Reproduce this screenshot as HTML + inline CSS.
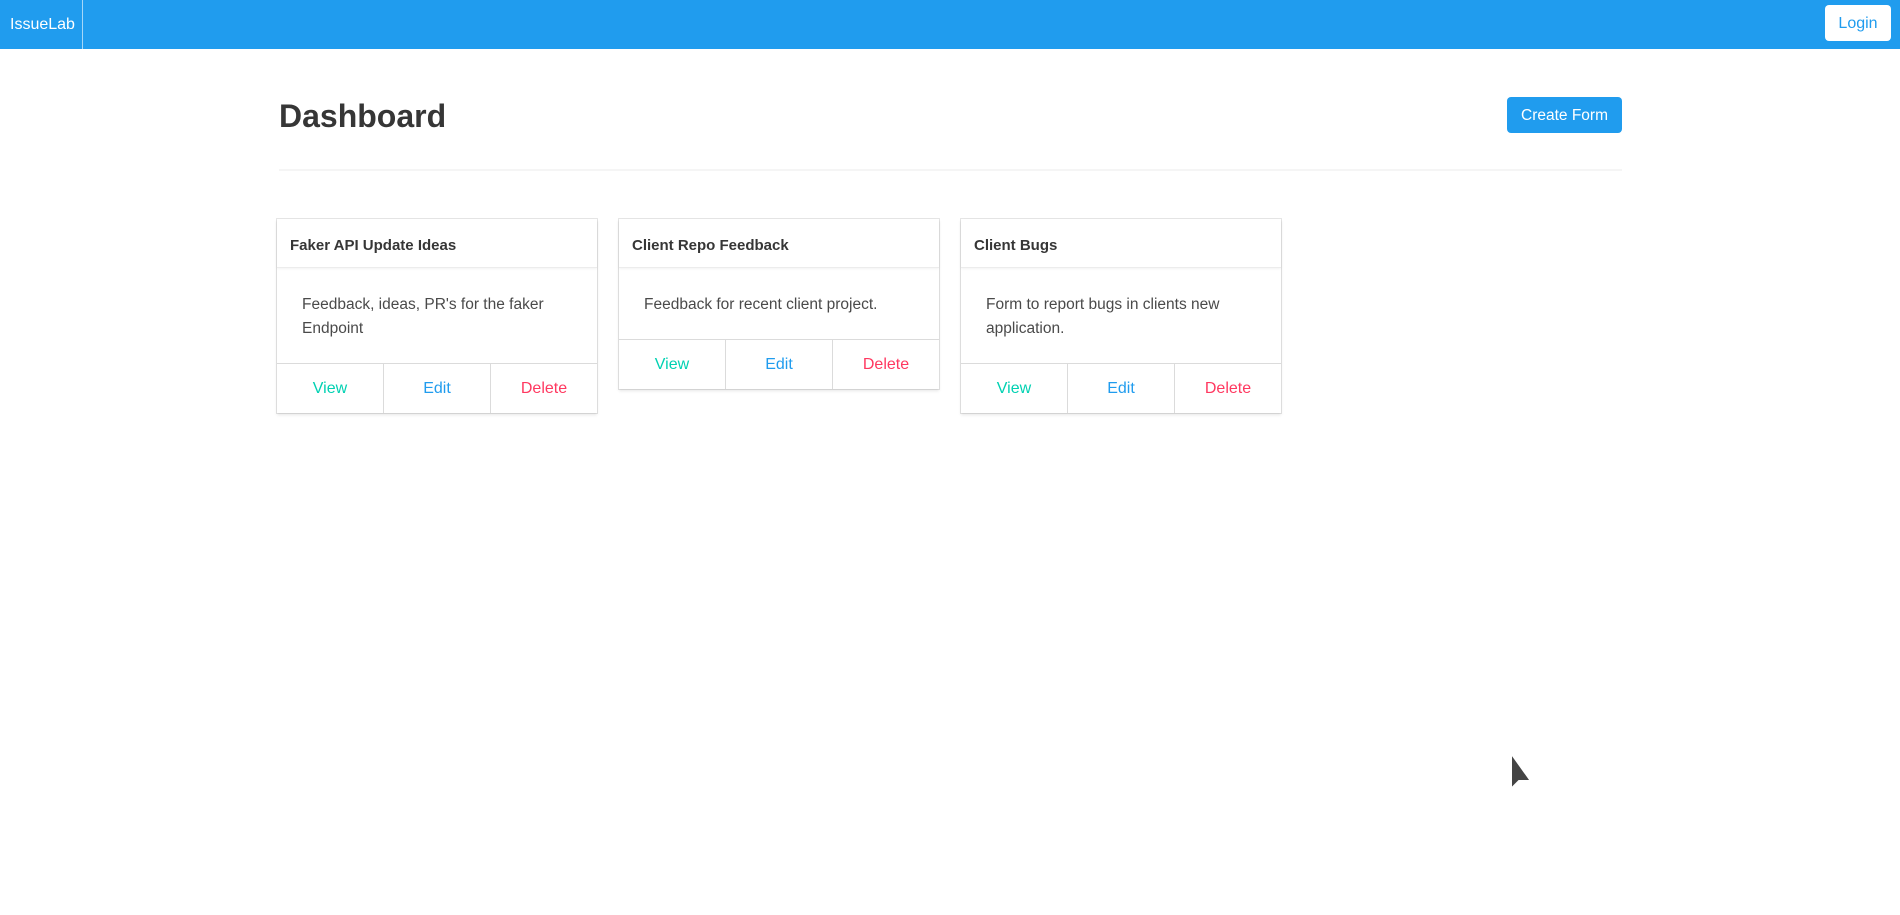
<!DOCTYPE html>
<html><head><meta charset="utf-8"><style>
*{box-sizing:border-box;margin:0;padding:0}
body{width:1900px;height:915px;background:#fff;font-family:"Liberation Sans",sans-serif;color:#4a4a4a;position:relative;overflow:hidden}
.nav{position:absolute;left:0;top:0;width:1900px;height:49px;background:#209cee}
.brand{position:absolute;left:0;top:0;width:83px;height:49px;border-right:1px solid rgba(255,255,255,.6);color:#fff;font-size:16px;line-height:49px;padding-left:10px}
.login{position:absolute;left:1825px;top:5px;width:66px;height:36px;background:#fff;border-radius:4px;color:#209cee;font-size:16px;line-height:38px;text-align:center}
h1{position:absolute;left:279px;top:96px;font-size:32px;font-weight:bold;color:#363636;line-height:40px}
.cf{position:absolute;left:1507px;top:97px;width:115px;height:36px;background:#209cee;border-radius:4px;color:#fff;font-size:15.5px;line-height:37px;text-align:center}
.hr{position:absolute;left:279px;top:169px;width:1343px;height:2px;background:#f5f5f5}
.card{position:absolute;top:219px;width:320px;background:#fff;box-shadow:0 2px 3px rgba(10,10,10,.1),0 0 0 1px rgba(10,10,10,.1)}
.ch{height:49px;border-bottom:1px solid #ececec;box-shadow:0 1px 2px rgba(10,10,10,.05);font-weight:bold;color:#363636;font-size:15px;line-height:48px;padding-left:13px;padding-top:3px}
.cb{padding:25px 24px 22px 25px;font-size:15.5px;line-height:24px}
.cf2{display:flex;border-top:1px solid #dbdbdb;height:50px}
.cf2 div{flex:1;text-align:center;line-height:50px;font-size:16px;border-right:1px solid #dbdbdb}
.cf2 div:last-child{border-right:none}
.v{color:#00d1b2}.e{color:#209cee}.d{color:#ff3860}
</style></head><body>
<div class="nav"><div class="brand">IssueLab</div><div class="login">Login</div></div>
<h1>Dashboard</h1>
<div class="cf">Create Form</div>
<div class="hr"></div>
<div class="card" style="left:277px"><div class="ch">Faker API Update Ideas</div><div class="cb">Feedback, ideas, PR's for the faker Endpoint</div><div class="cf2"><div class="v">View</div><div class="e">Edit</div><div class="d">Delete</div></div></div>
<div class="card" style="left:619px"><div class="ch">Client Repo Feedback</div><div class="cb">Feedback for recent client project.</div><div class="cf2"><div class="v">View</div><div class="e">Edit</div><div class="d">Delete</div></div></div>
<div class="card" style="left:961px"><div class="ch">Client Bugs</div><div class="cb">Form to report bugs in clients new application.</div><div class="cf2"><div class="v">View</div><div class="e">Edit</div><div class="d">Delete</div></div></div>
<svg style="position:absolute;left:1509px;top:751px" width="26" height="44" viewBox="0 0 26 44"><path d="M2 2 L2 38 L10 30 L22 30 Z" fill="#444" stroke="#fff" stroke-width="2"/></svg>
</body></html>
